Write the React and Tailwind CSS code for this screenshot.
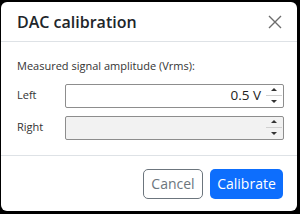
import React from 'react';

const font = { fontFamily: '"Open Sans", "Noto Sans", sans-serif' };

// Small up/down spinner shown at the right of a number field
const Spinner = () => (
  <div className="flex h-full w-[16px] flex-col">
    <div className="flex flex-1 items-center justify-center border-b border-[#d0d0d0]">
      <div className="h-0 w-0 border-x-[3px] border-b-[3px] border-x-transparent border-b-[#333]" />
    </div>
    <div className="flex flex-1 items-center justify-center">
      <div className="h-0 w-0 border-x-[3px] border-t-[3px] border-x-transparent border-t-[#333]" />
    </div>
  </div>
);

const NumberRow = ({ label, value, disabled }) => (
  <div className="flex items-center">
    <div className="w-[48px] text-[11px] text-[#333]">{label}</div>
    <div
      className={`flex h-[24px] flex-1 items-center rounded-[2px] border border-[#8d8d8d] pl-2 pr-[1px] ${
        disabled ? 'bg-[#f2f2f2]' : 'bg-white'
      }`}
    >
      <div className="flex-1 pr-[5px] text-right text-[13.5px] text-[#222]">{value}</div>
      <Spinner />
    </div>
  </div>
);

export default function App() {
  return (
    <div className="h-[214px] w-[300px] bg-black pb-[3px] pl-[1px] pr-[3px] pt-[2px]" style={font}>
      <div className="flex h-full flex-col rounded-[6px] bg-white">
        {/* Header */}
        <div className="flex h-[40px] items-center justify-between border-b border-[#dee2e6] pl-[16px] pr-[14px]">
          <h1 className="text-[16px] font-semibold text-[#212529]">DAC calibration</h1>
          <svg width="14" height="14" viewBox="0 0 14 14" className="mr-[1px]">
            <path d="M1 1 L13 13 M13 1 L1 13" stroke="#6c6c6c" strokeWidth="1.4" />
          </svg>
        </div>

        {/* Body */}
        <div className="flex flex-1 flex-col pl-[16px] pr-[13px] pt-[16px]">
          <div className="mb-[9px] text-[11px] text-[#333]">Measured signal amplitude (Vrms):</div>
          <div className="flex flex-col gap-[8px]">
            <NumberRow label="Left" value="0.5 V" />
            <NumberRow label="Right" value="" disabled />
          </div>
        </div>

        {/* Footer */}
        <div className="flex h-[56px] items-center justify-end gap-[7px] border-t border-[#dee2e6] pr-[14px]">
          <button className="h-[30px] w-[60px] rounded-[5px] border border-[#6c757d] text-[14px] text-[#6c757d]">
            Cancel
          </button>
          <button className="h-[30px] w-[73px] rounded-[5px] bg-[#0d6efd] text-[14px] text-white">
            Calibrate
          </button>
        </div>
      </div>
    </div>
  );
}
